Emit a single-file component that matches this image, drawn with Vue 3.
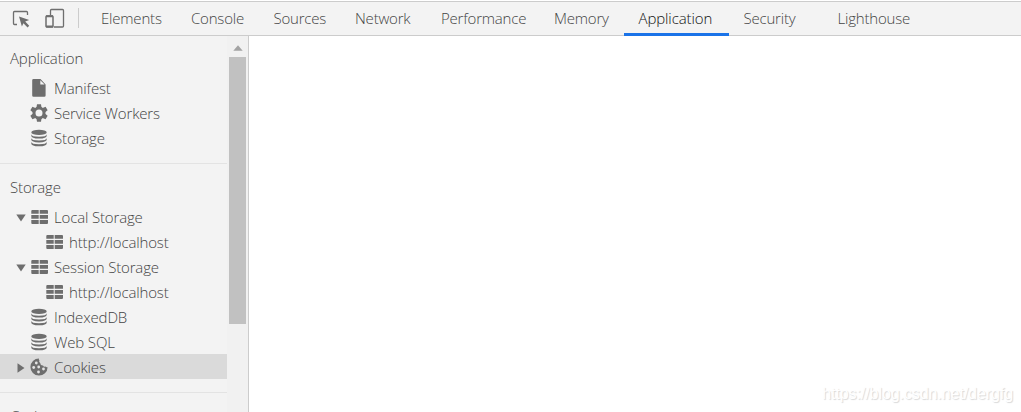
<template>
  <div class="devtools">
    <header class="toolbar">
      <div class="toolbar-actions">
        <svg class="action-icon" width="20" height="20" viewBox="0 0 20 20">
          <path d="M6 16.500H3.500q-1 0-1-1V4.500q0-1 1-1H15.500q1 0 1 1V7" fill="none" stroke="#6e6e6e" stroke-width="1.300" />
          <path d="M8 8.500l10.200 3.400-4 1.700 4 4.200-1.600 1.600-4.200-4.100-1.500 3.300z" fill="#6e6e6e" />
        </svg>
        <svg class="action-icon device" width="20" height="20" viewBox="0 0 20 20">
          <path d="M5.500 7V2.500q0-1 1-1H17.500q1 0 1 1V18q0 1-1 1H9" fill="none" stroke="#6e6e6e" stroke-width="1.300" />
          <rect x="1" y="8" width="7" height="11" rx="0.800" fill="none" stroke="#6e6e6e" stroke-width="1.500" />
          <path d="M1 8.300h7M1 18.500h7" stroke="#6e6e6e" stroke-width="2" />
        </svg>
      </div>
      <nav class="tabs">
        <a
          v-for="tab in tabs"
          :key="tab.title"
          class="tab"
          :class="{ active: tab.title === activeTab }"
          :style="{ width: tab.width + 'px' }"
          @click="activeTab = tab.title"
        >
          {{ tab.title }}
        </a>
      </nav>
    </header>

    <main class="body">
      <aside class="sidebar">
        <div class="tree">
          <section v-for="section in sections" :key="section.title" class="section">
            <h2 class="section-title">{{ section.title }}</h2>
            <div
              v-for="(item, index) in section.items"
              :key="index"
              class="row"
              :class="{ child: item.child, selected: item.selected }"
            >
              <span class="arrow">
                <svg v-if="item.arrow === 'down'" width="10" height="8" viewBox="0 0 10 8">
                  <path d="M0.300 0.500h9.400L5 7.500z" fill="#6e6e6e" />
                </svg>
                <svg v-if="item.arrow === 'right'" width="10" height="10" viewBox="0 0 10 10">
                  <path d="M1.500 0.300v9.400L8.500 5z" fill="#6e6e6e" />
                </svg>
              </span>
              <svg class="row-icon" width="18" height="18" viewBox="0 0 18 18" fill="#6e6e6e">
                <path v-if="item.icon === 'file'" fill-rule="evenodd" d="M3.500 0H10.500L15.600 5.500V16.500q0 1.300-1.300 1.300H3.500q-1.300 0-1.300-1.300V1.300Q2.200 0 3.500 0zM10.300 1.300V5.500h4.300z" />
                <g v-else-if="item.icon === 'gear'">
                  <circle cx="9" cy="9" r="5" fill="none" stroke="#6e6e6e" stroke-width="3" />
                  <path
                    v-for="angle in [0, 60, 120, 180, 240, 300]"
                    :key="angle"
                    d="M7 0.200h4l.6 3.800H6.400z"
                    :transform="`rotate(${angle} 9 9)`"
                  />
                </g>
                <g v-else-if="item.icon === 'database'">
                  <ellipse cx="9" cy="3.400" rx="7.700" ry="2.700" />
                  <path d="M1.300 5.200q0 2.500 7.700 2.500t7.700-2.500v1.600q0 2.800-7.700 2.800T1.300 6.800z" />
                  <path d="M1.300 9q0 2.500 7.700 2.500T16.700 9v1.600q0 2.800-7.700 2.800t-7.700-2.800z" />
                  <path d="M1.300 12.800q0 2.500 7.700 2.500t7.700-2.500v1.600q0 2.800-7.700 2.800t-7.700-2.800z" />
                </g>
                <g v-else-if="item.icon === 'table'">
                  <path d="M2.300 2h6.400v3.800H1.300V3q0-1 1-1zM9.700 2H17q1 0 1 1v2.800H9.700zM1.300 7h7.400v3.800H1.300zM9.700 7H18v3.800H9.700zM1.300 12h7.400v4H2.300q-1 0-1-1zM9.700 12H18V15q0 1-1 1H9.700z" />
                </g>
                <g v-else>
                  <path d="M9 .4a8.600 8.600 0 1 0 8.600 8.800q-1 .5-2-.6-1.900.5-2.600-1.100-2.600.2-2.700-2.300Q8.500 4 9.400 2.300 8.500 1.500 9 .4z" />
                  <g class="crumbs">
                    <circle cx="6.300" cy="5" r="1.400" />
                    <circle cx="3.700" cy="9.500" r="1.400" />
                    <circle cx="8.700" cy="9" r="1.400" />
                    <circle cx="13.500" cy="11" r="1.400" />
                    <circle cx="8.500" cy="14" r="1.400" />
                  </g>
                </g>
              </svg>
              <span class="label">{{ item.label }}</span>
            </div>
          </section>
        </div>
        <div class="scrollbar">
          <svg class="scroll-up" width="10" height="6" viewBox="0 0 10 6">
            <path d="M5 0.300L9.700 5.700H0.300z" fill="#a3a3a3" />
          </svg>
          <div class="thumb"></div>
        </div>
      </aside>
      <div class="content">
        <span class="watermark">https://blog.csdn.net/dergfg</span>
      </div>
    </main>
  </div>
</template>

<script setup>
import { ref } from 'vue';

const activeTab = ref('Application');

const tabs = [
  { title: 'Elements', width: 90 },
  { title: 'Console', width: 82.5 },
  { title: 'Sources', width: 81.5 },
  { title: 'Network', width: 86 },
  { title: 'Performance', width: 113 },
  { title: 'Memory', width: 84.5 },
  { title: 'Application', width: 105 },
  { title: 'Security', width: 94 },
  { title: 'Lighthouse', width: 104 },
];

const sections = [
  {
    title: 'Application',
    items: [
      { label: 'Manifest', icon: 'file' },
      { label: 'Service Workers', icon: 'gear' },
      { label: 'Storage', icon: 'database' },
    ],
  },
  {
    title: 'Storage',
    items: [
      { label: 'Local Storage', icon: 'table', arrow: 'down' },
      { label: 'http://localhost', icon: 'table', child: true },
      { label: 'Session Storage', icon: 'table', arrow: 'down' },
      { label: 'http://localhost', icon: 'table', child: true },
      { label: 'IndexedDB', icon: 'database' },
      { label: 'Web SQL', icon: 'database' },
      { label: 'Cookies', icon: 'cookie', arrow: 'right', selected: true },
    ],
  },
  { title: 'Cache', items: [] },
];
</script>

<style>
body {
  margin: 0;
  overflow: hidden;
}
</style>

<style scoped>
.devtools {
  display: flex;
  flex-direction: column;
  height: 412px;
  overflow: hidden;
  background: #fff;
  color: #444;
  font-family: 'Open Sans', 'Noto Sans', sans-serif;
  font-size: 15px;
  font-weight: 350;
  letter-spacing: -0.15px;
}

.toolbar {
  box-sizing: border-box;
  display: flex;
  flex-shrink: 0;
  height: 35px;
  margin-top: 1px;
  border-top: 1px solid #ccc;
  border-bottom: 1px solid #ccc;
  background: #f3f3f3;
}

.toolbar-actions {
  box-sizing: border-box;
  display: flex;
  width: 79px;
  height: 20px;
  margin-top: 6px;
  padding-left: 11px;
  border-right: 1px solid #ccc;
}

.action-icon {
  flex-shrink: 0;
}

.device {
  margin-left: 14px;
}

.tabs {
  display: flex;
  height: 34px;
  margin-left: 7px;
}

.tab {
  box-sizing: border-box;
  flex-shrink: 0;
  padding-left: 15px;
  letter-spacing: -0.2px;
  line-height: 33px;
  white-space: nowrap;
  cursor: pointer;
}

.tab.active {
  color: #111;
  letter-spacing: -0.1px;
  border-bottom: 3px solid #1a73e8;
}

.body {
  display: flex;
  flex: 1;
  min-height: 0;
}

.sidebar {
  box-sizing: border-box;
  display: flex;
  flex-shrink: 0;
  width: 249px;
  border-right: 1px solid #ccc;
  background: #f3f3f3;
}

.tree {
  width: 227px;
  overflow: hidden;
}

.section {
  padding-bottom: 13px;
  border-top: 1px solid #e3e3e3;
}

.section:first-child {
  margin-top: -2px;
}

.section-title {
  height: 40px;
  margin: 0;
  padding-left: 10px;
  font-size: inherit;
  font-weight: inherit;
  line-height: 47px;
}

.row {
  box-sizing: border-box;
  display: flex;
  align-items: center;
  height: 25px;
  padding-top: 2px;
  padding-left: 16px;
}

.row.child {
  padding-left: 31px;
}

.row.selected {
  background: #dadada;
}

.arrow {
  display: flex;
  width: 10px;
  margin-right: 4px;
}

.row-icon {
  margin-top: -1px;
  margin-right: 6px;
}

.crumbs {
  fill: #e4e4e4;
}

.label {
  line-height: 23px;
  white-space: nowrap;
}

.scrollbar {
  display: flex;
  flex-direction: column;
  align-items: center;
  width: 21px;
  background: #f1f1f1;
}

.scroll-up {
  margin-top: 9px;
}

.thumb {
  width: 17px;
  height: 267px;
  margin-top: 6px;
  background: #c1c1c1;
}

.content {
  display: flex;
  flex: 1;
  align-items: flex-end;
  justify-content: flex-end;
}

.watermark {
  margin: 0 8px 9px 0;
  color: #fff;
  font-family: 'Liberation Sans', sans-serif;
  font-size: 16px;
  font-weight: 400;
  letter-spacing: -0.08px;
  line-height: 18px;
  text-shadow: 1px 1px 1px #d8d8d8;
}
</style>
